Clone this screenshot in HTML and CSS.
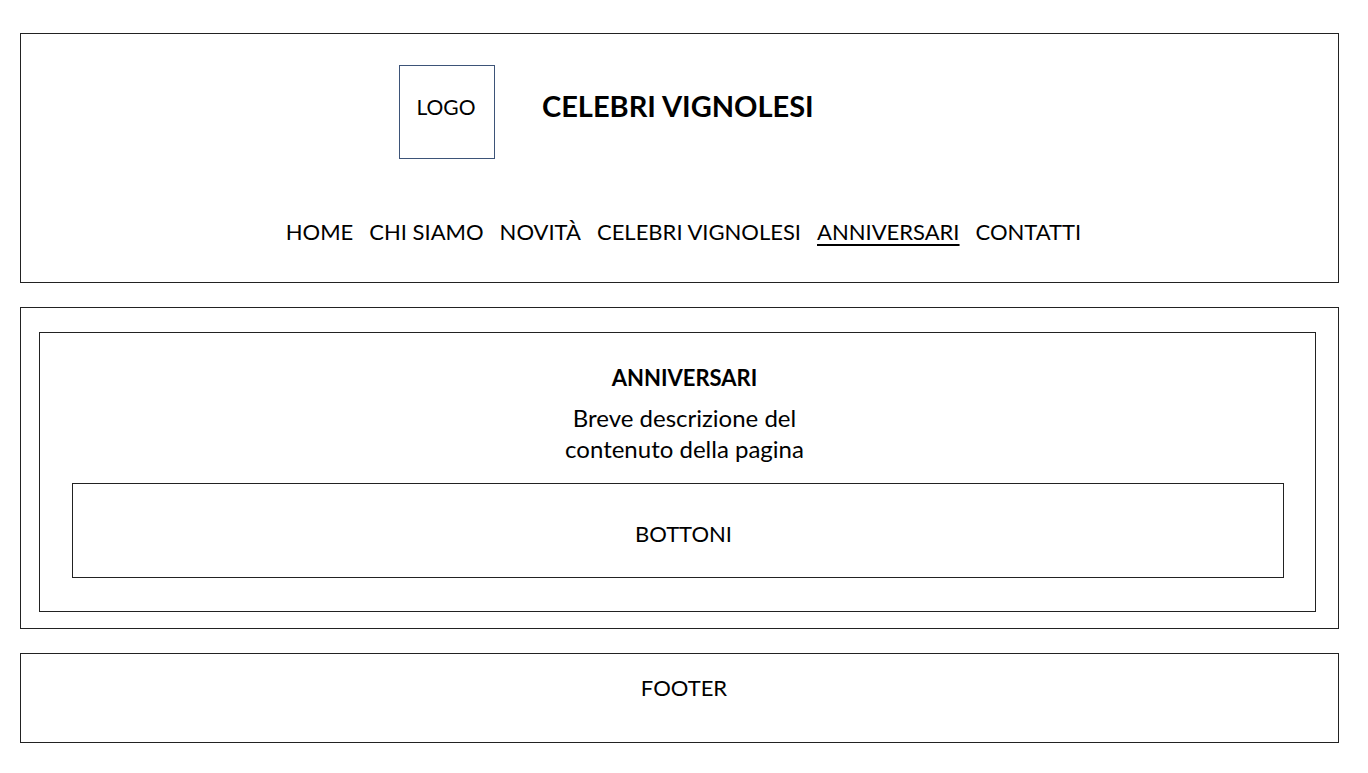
FILE: index.html
```html
<!DOCTYPE html>
<html lang="it">
<head>
<meta charset="utf-8">
<title>Celebri Vignolesi - Anniversari</title>
<link rel="stylesheet" href="styles.css">
</head>
<body>
<div class="page">
  <header class="header">
    <div class="brand">
      <div class="logo">LOGO</div>
      <h1 class="title">CELEBRI VIGNOLESI</h1>
    </div>
    <nav class="nav">
      <a href="#">HOME</a>
      <a href="#">CHI SIAMO</a>
      <a href="#">NOVITÀ</a>
      <a href="#">CELEBRI VIGNOLESI</a>
      <a href="#" class="active">ANNIVERSARI</a>
      <a href="#">CONTATTI</a>
    </nav>
  </header>
  <main class="main">
    <section class="content">
      <h2 class="content-title">ANNIVERSARI</h2>
      <p class="content-desc">Breve descrizione del<br>contenuto della pagina</p>
      <div class="buttons">BOTTONI</div>
    </section>
  </main>
  <footer class="footer">FOOTER</footer>
</div>
</body>
</html>
```
FILE: styles.css
```css
* { box-sizing: border-box; }
html, body { margin: 0; padding: 0; background: #fff; }
body {
  font-family: Lato, "Open Sans", sans-serif;
  color: #000;
}
.page {
  display: flex;
  flex-direction: column;
  gap: 24px;
  padding: 33px 29px 30px 20px;
}
.header {
  border: 1px solid #222;
  height: 250px;
  display: flex;
  flex-direction: column;
}
.brand {
  display: flex;
  align-items: center;
  margin: 31px 0 0 378px;
}
.logo {
  width: 96px;
  height: 94px;
  border: 1px solid #3d5478;
  display: flex;
  align-items: center;
  justify-content: center;
  font-size: 21px;
  padding: 0 2px 11px 0;
}
.title {
  margin: 0 0 14px 47px;
  font-size: 29px;
  font-weight: 700;
}
.nav {
  margin-top: auto;
  padding: 0 0 35px 8px;
  display: flex;
  justify-content: center;
  gap: 16px;
  font-size: 22px;
  line-height: 30px;
}
.nav a {
  color: #000;
  text-decoration: none;
}
.nav a.active {
  text-decoration: underline;
  text-underline-offset: 4px;
  text-decoration-thickness: 2px;
}
.main {
  border: 1px solid #222;
  padding: 24px 22px 16px 18px;
}
.content {
  border: 1px solid #222;
  padding: 30px 31px 33px 32px;
  text-align: center;
}
.content-title {
  margin: 0;
  padding-left: 13px;
  font-size: 22px;
  line-height: 30px;
  font-weight: 700;
}
.content-desc {
  margin: 9px 0 19px;
  padding-left: 13px;
  font-size: 24px;
  line-height: 31px;
}
.buttons {
  border: 1px solid #222;
  height: 95px;
  display: flex;
  align-items: center;
  justify-content: center;
  padding: 6px 0 0 11px;
  font-size: 22px;
}
.footer {
  border: 1px solid #222;
  height: 90px;
  padding: 19px 0 0 9px;
  text-align: center;
  font-size: 22px;
  line-height: 30px;
}
```
